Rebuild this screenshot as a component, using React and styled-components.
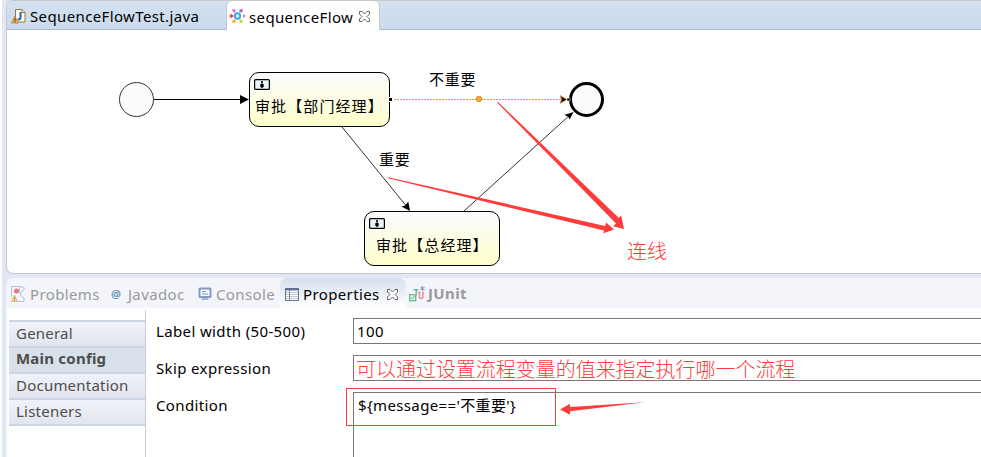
import React from "react";
import styled, { createGlobalStyle } from "styled-components";

const Global = createGlobalStyle`
  * { box-sizing: border-box; }
  html, body { margin: 0; padding: 0; overflow: hidden; }
  body { font-family: "Noto Sans", "Noto Sans CJK SC", sans-serif; font-size: 15px; color: #000; }
  svg { display: block; flex: none; }
`;

const Window = styled.div`
  width: 981px;
  height: 457px;
  overflow: hidden;
  padding-left: 6px;
  background: linear-gradient(90deg, #fcfdff 2px, #e1e7f5 2px);
  display: flex;
  flex-direction: column;
  gap: 4px;
`;

const Editor = styled.section`
  height: 274px;
  border: 1px solid #c6c8cc;
  border-right: 0;
  border-radius: 6px 0 0 7px;
  background: #fff;
  overflow: hidden;
`;

const EditorTabs = styled.div`
  height: 29px;
  display: flex;
  background: linear-gradient(#d3e1ef, #cbdbed);
  border-bottom: 1px solid #b1b7ca;
`;

const EditorTab = styled.div`
  width: ${(p) => p.$w}px;
  height: ${(p) => (p.$active ? 29 : 28)}px;
  padding: ${(p) => (p.$active ? "1px 0 0 2px" : "1px 0 0 4px")};
  display: flex;
  align-items: center;
  border: solid #c2c9d6;
  border-width: ${(p) => (p.$active ? "0 1px 0 1px" : "0")};
  border-radius: 6px 6px 0 0;
  background: ${(p) => (p.$active ? "#fff" : "transparent")};
`;

const Caption = styled.span`
  white-space: pre;
  line-height: 20px;
  font-size: ${(p) => p.$size || 15}px;
  letter-spacing: ${(p) => p.$track ?? 0.37}px;
  font-weight: ${(p) => (p.$bold ? 700 : 400)};
  color: ${(p) => p.$color || "#000"};
  margin: ${(p) => p.$margin || "0"};
`;

const Canvas = styled.div`
  position: relative;
  height: 243px;
`;

const Links = styled.svg`
  position: absolute;
  left: -7px;
  top: -30px;
  overflow: visible;
`;

const Task = styled.div`
  position: absolute;
  left: ${(p) => p.$x - 7}px;
  top: ${(p) => p.$y - 30}px;
  width: ${(p) => p.$w}px;
  height: 55px;
  padding: 6px 0 0 4px;
  border: 1px solid #000;
  border-radius: 10px;
  background: linear-gradient(#fafbfd, #ffffcb);
`;

const TaskName = styled.div`
  margin: 4px 0 0 ${(p) => p.$indent}px;
  font: 15px/24px "Noto Sans CJK SC", sans-serif;
  letter-spacing: 1.1px;
  white-space: nowrap;
`;

const FlowLabel = styled.div`
  position: absolute;
  left: ${(p) => p.$x - 7}px;
  top: ${(p) => p.$y - 30}px;
  font: ${(p) => p.$size || 15}px/24px "Noto Sans CJK SC", sans-serif;
  letter-spacing: ${(p) => (p.$size ? 0 : 0.8)}px;
  font-weight: ${(p) => (p.$color ? 300 : 400)};
  color: ${(p) => p.$color || "#000"};
  white-space: nowrap;
`;

const Views = styled.section`
  flex: 1;
  min-height: 0;
  display: flex;
  flex-direction: column;
  background: #fff;
  border-left: 1px solid #f0f3fa;
  border-radius: 7px 0 0 0;
  overflow: hidden;
`;

const ViewTabs = styled.div`
  height: 30px;
  flex: none;
  display: flex;
  background: #f3f5fb;
`;

const ViewTab = styled.div`
  display: flex;
  align-items: center;
  flex: none;
  width: ${(p) => p.$w}px;
  padding: 2px 0 0 ${(p) => p.$pad}px;
  border-radius: 7px 7px 0 0;
  background: ${(p) => (p.$active ? "linear-gradient(#d5e0ed, #fff)" : "transparent")};
`;

const Body = styled.div`
  flex: 1;
  display: flex;
  padding: 2px 0 0 2px;
`;

const Side = styled.nav`
  width: 137px;
  padding-top: 10px;
  border-right: 1px solid #c5cee0;
`;

const SideItem = styled.div`
  height: 26px;
  padding: ${(p) => (p.$on ? 0 : 1)}px 0 0 7px;
  border-top: 2px solid #ccd5e4;
  background: ${(p) => (p.$on ? "#d8e0e9" : "linear-gradient(#eff2f7, #e2e5ef)")};
  &:last-child { height: 28px; border-bottom: 2px solid #ccd5e4; }
`;

const Form = styled.div`
  flex: 1;
  display: grid;
  grid-template-columns: 197px 1fr;
  grid-template-rows: 26px 26px 1fr;
  row-gap: 11px;
  padding: 8px 0 0 10px;
`;

const Field = styled.div`
  position: relative;
  height: ${(p) => (p.$tall ? 80 : 26)}px;
  border: 1px solid #777;
  border-right: 0;
  padding: 2px 0 0 ${(p) => p.$pad}px;
  white-space: nowrap;
`;

const RedNote = styled.span`
  font: 300 20px/21px "Noto Sans CJK SC", sans-serif;
  letter-spacing: -0.03px;
  color: #ff3b3b;
`;

const Highlight = styled.div`
  position: absolute;
  left: -8px;
  top: -5px;
  width: 210px;
  height: 38px;
  border: 1px solid #f93c3c;
`;

const Pointer = styled.svg`
  position: absolute;
  left: 206px;
  top: 8px;
`;

const JavaIcon = () => (
  <svg width="16" height="16" viewBox="0 0 16 16">
    <path d="M4.500 1.500h6.500l3 3v9.500h-9.500z" fill="#fbfbf4" stroke="#8f7a43" />
    <path d="M11 1.500v3h3" fill="#efe6c4" stroke="#8f7a43" />
    <path d="M9.500 4v5.500q0 2-2 2h-1" fill="none" stroke="#2f659f" strokeWidth="2" />
    <path d="M3.800 8.200L7.500 15H.5z" fill="#f3b24e" stroke="#ba7d2e" strokeWidth=".8" />
    <path d="M4 10.400v2m0 .8v1" stroke="#49300c" strokeWidth="1.200" />
  </svg>
);

const FlowIcon = () => (
  <svg width="17" height="16" viewBox="0 0 17 16">
    <circle cx="8.500" cy="8" r="2.700" fill="#e5f8ff" stroke="#38ace2" strokeWidth="2" />
    <path d="M0 8l1.500-1V5.500L5 8l-3.500 2.500V9z" fill="#ee3d48" />
    <path d="M17 8l-3-2v4z" fill="#bc8bac" />
    <path d="M3 .8l2 .7 1.500-.5v3.500L3 4l.8-1z" fill="#df6fd1" />
    <path d="M14 .8l-2 .7-1.500-.5v3.500L14 4l-.8-1z" fill="#af5fb7" />
    <path d="M3 15.200l2-.7 1.500.5v-3.500L3 12l.8 1z" fill="#f7a724" />
    <path d="M14 15.200l-2-.7-1.500.5v-3.500L14 12l-.8 1z" fill="#bed631" />
  </svg>
);

const CloseIcon = () => (
  <svg width="11" height="11" viewBox="0 0 11 11">
    <path
      d="M.5.5h2.500l2.500 2.500 2.500-2.500h2.500v2.500L8 5.500l2.500 2.500v2.500H8L5.500 8 3 10.500H.5V8L3 5.500.5 3z"
      fill="#fff"
      stroke="#555"
      strokeWidth=".9"
    />
  </svg>
);

const ProblemsIcon = () => (
  <svg width="15" height="17" viewBox="0 0 15 17">
    <path d="M.5 11V.5h8V7M8.500 1h4.500v3q-3.500 1-3.500 4t3.500 4v3.500h-6" fill="#f4f7fd" stroke="#b5bfd8" />
    <circle cx="5.500" cy="5" r="2.500" fill="#e8747e" />
    <path d="M3.500 9l3.200 6.500H.5z" fill="#f5cf92" stroke="#dcb27a" strokeWidth=".8" />
    <path d="M3.600 11v2m0 .7v1" stroke="#9b8364" />
  </svg>
);

const ConsoleIcon = () => (
  <svg width="14" height="14" viewBox="0 0 14 14">
    <rect x="1.500" y="1.500" width="11" height="8.500" rx=".5" fill="#f3f8ff" stroke="#819bc5" strokeWidth="2" />
    <path d="M4 4.500h4M4 7h6" stroke="#8194b7" />
    <path d="M4.500 11h5l1.500 2H3z" fill="#9fb2cf" />
  </svg>
);

const TableIcon = () => (
  <svg width="14" height="13" viewBox="0 0 14 13">
    <rect x=".5" y=".5" width="13" height="12" fill="#fff" stroke="#64738a" />
    <path d="M1 1.500h12" stroke="#5e7493" strokeWidth="2" />
    <path d="M1 4.500h12M1 6.500h12M1 8.500h12M1 10.500h12" stroke="#bdc6d0" />
    <path d="M4.500 2v10" stroke="#7d8ca3" />
  </svg>
);

const JUnitIcon = () => (
  <svg width="17" height="16" viewBox="0 0 17 16">
    <rect x=".7" y="8.700" width="6" height="6" fill="#e9f7ef" stroke="#70bc91" strokeWidth="1.400" />
    <path d="M2 11.500l1.300 1.700L6 9.500" fill="none" stroke="#70bc91" />
    <path d="M4.500 3.700h5M7.300 3.500v6" fill="none" stroke="#70bc91" strokeWidth="1.500" />
    <path d="M9 6.500h1.500v4q0 2 1.700 2t1.700-2v-4h1" fill="none" stroke="#e68b9b" strokeWidth="1.500" />
    <path d="M13.500 0v5M11.300 1.200l4.400 2.600m0-2.600l-4.400 2.600" stroke="#8396ad" />
  </svg>
);

const UserIcon = () => (
  <svg width="16" height="11" viewBox="0 0 16 11">
    <rect x=".6" y=".6" width="14.800" height="9.800" rx="1" fill="#e9f4fc" stroke="#000" strokeWidth="1.200" />
    <circle cx="8" cy="3" r="1.100" />
    <path d="M6.300 5.200L8 4.300l1.700.9v2.300L8.800 8.800H7.200L6.300 7.500z" />
  </svg>
);

function Diagram() {
  return (
    <Canvas>
      <Links width="981" height="273" viewBox="0 0 981 273">
        <g fill="#fafbfd" stroke="#000">
          <circle cx="136.500" cy="99.500" r="17" stroke="#333" />
          <circle cx="586.500" cy="99.500" r="16" strokeWidth="3" />
        </g>
        <path d="M154 99.500h88" stroke="#000" />
        <path d="M240 95l9 4.500-9 4.500z" />
        <path d="M342 127l66 81M464 211L571 114" stroke="#333" strokeWidth="1" />
        <path d="M410 211l-8.700-4.500 4-1 3-4z" />
        <path d="M573.500 112l-3.800 7.500-1.700-3-3.800-1.500z" />
        <path d="M391 99.500h170" stroke="#e9953e" strokeDasharray="2 1" />
        <circle cx="479" cy="99" r="2.800" fill="#ffa22e" stroke="#cf7b1c" strokeWidth=".7" />
        <path d="M560 95.500l7 4-7 4 1.500-4z" stroke="#e9953e" strokeWidth=".8" />
        <path d="M567 98h3v3h-3z" stroke="#fff" strokeWidth=".5" />
        <g fill="#ff3b3b">
          <path d="M497 102.600l.8-.8L618.900 218l2.300-2.500 2.900 13.500-11-2.800 3-2.700z" />
          <path d="M388 177.200v1L604 230.500l-.7 2.700 10.800-3.700-8-7-.9 3.500z" />
        </g>
      </Links>
      <Task $x={249} $y={72} $w={141}>
        <UserIcon />
        <TaskName $indent={1}>审批【部门经理】</TaskName>
      </Task>
      <Task $x={364} $y={211} $w={136}>
        <UserIcon />
        <TaskName $indent={7}>审批【总经理】</TaskName>
      </Task>
      <Links width="981" height="273" viewBox="0 0 981 273">
        <path d="M388.500 97.500h4v4h-4z" fill="#000" stroke="#fff" />
      </Links>
      <FlowLabel $x={429} $y={67}>不重要</FlowLabel>
      <FlowLabel $x={379} $y={147}>重要</FlowLabel>
      <FlowLabel $x={627} $y={239} $size={20} $color="#ff3b3b">连线</FlowLabel>
    </Canvas>
  );
}

const sections = ["General", "Main config", "Documentation", "Listeners"];

export default function App() {
  return (
    <Window>
      <Global />
      <Editor>
        <EditorTabs>
          <EditorTab $w={219}>
            <JavaIcon />
            <Caption $margin="1px 0 0 3px">SequenceFlowTest.java</Caption>
          </EditorTab>
          <EditorTab $w={154} $active>
            <FlowIcon />
            <Caption $margin="1px 6px 0 3px">sequenceFlow</Caption>
            <CloseIcon />
          </EditorTab>
        </EditorTabs>
        <Diagram />
      </Editor>
      <Views>
        <ViewTabs>
          <ViewTab $w={102} $pad={4}>
            <ProblemsIcon />
            <Caption $color="#999" $margin="0 0 0 4px">Problems</Caption>
          </ViewTab>
          <ViewTab $w={87} $pad={2}>
            <Caption $size={11} $track={0} $color="#6596bd" $bold>@</Caption>
            <Caption $color="#999" $margin="0 0 0 7px">Javadoc</Caption>
          </ViewTab>
          <ViewTab $w={84} $pad={2}>
            <ConsoleIcon />
            <Caption $color="#999" $margin="0 0 0 4px">Console</Caption>
          </ViewTab>
          <ViewTab $w={126} $pad={5} $active>
            <TableIcon />
            <Caption $margin="0 7px 0 4px">Properties</Caption>
            <CloseIcon />
          </ViewTab>
          <ViewTab $w={80} $pad={3}>
            <JUnitIcon />
            <Caption $color="#999" $bold $margin="-2px 0 0 2px">JUnit</Caption>
          </ViewTab>
        </ViewTabs>
        <Body>
          <Side>
            {sections.map((name) => (
              <SideItem key={name} $on={name === "Main config"}>
                <Caption $color="#4d4d4d" $track={0.22} $bold={name === "Main config"}>{name}</Caption>
              </SideItem>
            ))}
          </Side>
          <Form>
            <Caption $margin="3px 0 0">Label width (50-500)</Caption>
            <Field $pad={3}><Caption>100</Caption></Field>
            <Caption $margin="3px 0 0">Skip expression</Caption>
            <Field $pad={2}><RedNote>可以通过设置流程变量的值来指定执行哪一个流程</RedNote></Field>
            <Caption $margin="3px 0 0">Condition</Caption>
            <Field $tall $pad={4}>
              <Caption>{"${message=='不重要'}"}</Caption>
              <Highlight />
              <Pointer width="86" height="16" viewBox="0 0 86 16">
                <path d="M0 8.500l10-5.800v3.400L85 1.200 10 10.200v3.500z" fill="#ff3b3b" />
              </Pointer>
            </Field>
          </Form>
        </Body>
      </Views>
    </Window>
  );
}
